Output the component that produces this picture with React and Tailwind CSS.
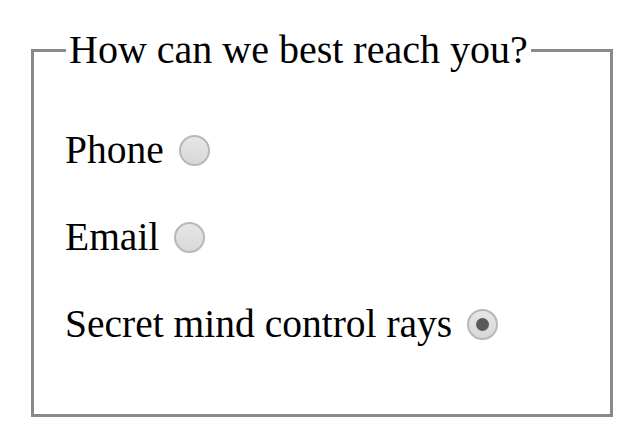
import React from 'react';

const Radio = ({ checked }) => (
  <span className="inline-flex items-center justify-center w-[31px] h-[31px] rounded-full border-2 border-[#b8b8b8] bg-gradient-to-b from-[#e6e6e6] to-[#d8d8d8] shrink-0">
    {checked && <span className="w-[13px] h-[13px] rounded-full bg-[#5a5a5a]" />}
  </span>
);

const options = [
  { label: 'Phone', checked: false },
  { label: 'Email', checked: false },
  { label: 'Secret mind control rays', checked: true },
];

export default function App() {
  return (
    <div className="w-[640px] h-[448px] bg-white pt-[28px] pl-[31px]" style={{ fontFamily: '"Liberation Serif", "Times New Roman", serif' }}>
      <fieldset className="w-[582px] h-[389px] border-[3px] border-[#8a8a8a] m-0 pl-[31px] pr-0 pb-0 pt-0">
        <legend className="text-[40px] leading-[44px] text-black px-[3px] ml-[1px]">How can we best reach you?</legend>
        <div className="flex flex-col gap-[43px] mt-[56px]">
          {options.map((o) => (
            <label key={o.label} className="flex items-center gap-[15px] text-[39.5px] leading-[44px] text-black">
              <span>{o.label}</span>
              <Radio checked={o.checked} />
            </label>
          ))}
        </div>
      </fieldset>
    </div>
  );
}
